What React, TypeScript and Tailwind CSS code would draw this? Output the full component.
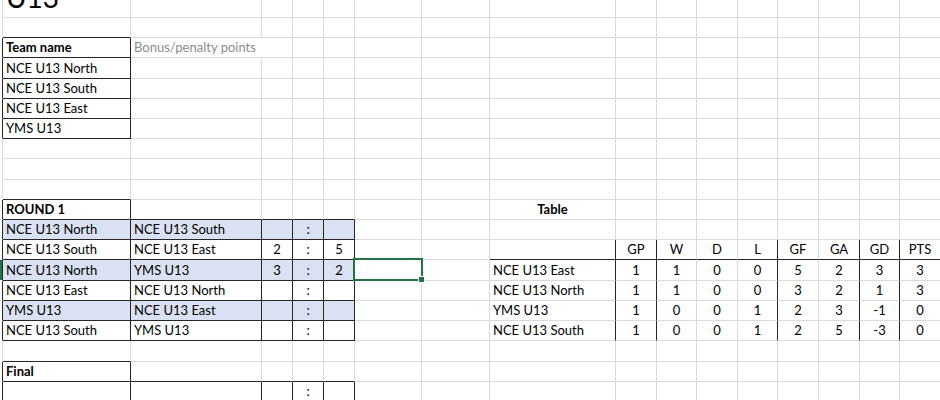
import React from "react";

type C = {
  t?: string;
  bold?: boolean;
  center?: boolean;
  gray?: boolean;
  fill?: boolean;
  R?: boolean;
  B?: boolean;
  hideR?: boolean;
  spill?: boolean;
  sel?: boolean;
  title?: boolean;
};

const NROWS = 20;
const NCOLS = 16;

function buildGrid(): C[][] {
  const g: C[][] = [];
  for (let r = 0; r < NROWS; r++) {
    const row: C[] = [];
    for (let c = 0; c < NCOLS; c++) row.push({});
    g.push(row);
  }
  g[0][0] = { t: "U13", title: true };
  g[1][0] = { B: true };
  g[2][0] = { t: "Team name", bold: true, R: true, B: true };
  g[2][1] = { t: "Bonus/penalty points", gray: true, spill: true, hideR: true };
  ["NCE U13 North", "NCE U13 South", "NCE U13 East", "YMS U13"].forEach((n, i) => {
    g[3 + i][0] = { t: n, R: true, B: true };
  });
  g[9][0] = { B: true };
  g[10][0] = { t: "ROUND 1", bold: true, R: true, B: true };
  g[10][1] = { B: true };
  g[10][2] = { B: true };
  g[10][3] = { B: true };
  g[10][4] = { B: true };
  g[10][7] = { t: "Table", bold: true, center: true };
  const matches: [string, string, string, string][] = [
    ["NCE U13 North", "NCE U13 South", "", ""],
    ["NCE U13 South", "NCE U13 East", "2", "5"],
    ["NCE U13 North", "YMS U13", "3", "2"],
    ["NCE U13 East", "NCE U13 North", "", ""],
    ["YMS U13", "NCE U13 East", "", ""],
    ["NCE U13 South", "YMS U13", "", ""],
  ];
  matches.forEach((m, i) => {
    const r = 11 + i;
    const fill = i % 2 === 0;
    g[r][0] = { t: m[0], R: true, B: true, fill };
    g[r][1] = { t: m[1], R: true, B: true, fill };
    g[r][2] = { t: m[2], R: true, B: true, fill, center: true };
    g[r][3] = { t: ":", R: true, B: true, fill, center: true };
    g[r][4] = { t: m[3], R: true, B: true, fill, center: true };
  });
  g[13][5] = { sel: true };
  const heads = ["GP", "W", "D", "L", "GF", "GA", "GD", "PTS"];
  const blackRight = [true, false, false, true, false, true, true, false];
  g[12][7] = { R: true, B: true };
  heads.forEach((h, i) => {
    g[12][8 + i] = { t: h, center: true, B: true, R: blackRight[i] };
  });
  const table: [string, string[]][] = [
    ["NCE U13 East", ["1", "1", "0", "0", "5", "2", "3", "3"]],
    ["NCE U13 North", ["1", "1", "0", "0", "3", "2", "1", "3"]],
    ["YMS U13", ["1", "0", "0", "1", "2", "3", "-1", "0"]],
    ["NCE U13 South", ["1", "0", "0", "1", "2", "5", "-3", "0"]],
  ];
  table.forEach(([name, vals], i) => {
    const r = 13 + i;
    g[r][7] = { t: name, R: true };
    vals.forEach((v, j) => {
      g[r][8 + j] = { t: v, center: true, R: blackRight[j] };
    });
  });
  g[17][0] = { B: true };
  g[18][0] = { t: "Final", bold: true, R: true, B: true };
  g[18][1] = { B: true };
  g[18][2] = { B: true };
  g[18][3] = { B: true };
  g[18][4] = { B: true };
  g[19][0] = { R: true };
  g[19][1] = { R: true };
  g[19][2] = { R: true };
  g[19][3] = { t: ":", R: true, center: true };
  g[19][4] = { R: true };
  return g;
}

const leftBlack = new Set([2, 3, 4, 5, 6, 10, 11, 12, 13, 14, 15, 16, 18, 19]);

function Cell({ c }: { c: C }) {
  if (c.title) {
    return (
      <div className="flex items-end overflow-hidden border-r border-b border-r-[#dadada] border-b-[#dadada] bg-white pl-[3px] pb-[6px]">
        <span className="text-[28px] leading-none text-black">{c.t}</span>
      </div>
    );
  }
  const cls = [
    "flex items-end whitespace-nowrap border-r border-b leading-[19px] text-[13px]",
    c.spill ? "relative z-10 overflow-visible" : c.sel ? "relative overflow-visible" : "overflow-hidden",
    c.R ? "border-r-[#262626]" : c.hideR ? "border-r-white" : "border-r-[#dadada]",
    c.B ? "border-b-[#262626]" : "border-b-[#dadada]",
    c.fill ? "bg-[#d9e1f2]" : "bg-white",
    c.center ? "justify-center" : "pl-[3px]",
    c.bold ? "font-bold" : "",
    c.gray ? "text-[#8c8c8c]" : "text-black",
  ].join(" ");
  return (
    <div className={cls}>
      {c.t ? <span>{c.t}</span> : null}
      {c.sel ? (
        <div className="absolute -left-[2px] -top-[2px] z-10 h-[23px] w-[70px] border-2 border-[#217346]">
          <div className="absolute left-[63px] top-[16px] h-[7px] w-[7px] border border-white bg-[#217346]" />
        </div>
      ) : null}
    </div>
  );
}

export default function App() {
  const grid = buildGrid();
  return (
    <div className="h-[400px] w-[940px] overflow-hidden bg-white font-[Lato,sans-serif] text-black">
      <div className="grid grid-cols-[3px_128px_131px_31px_31px_31px_67px_68px_126px_41px_40px_41px_40px_41px_41px_40px_41px] grid-rows-[18px_20px_20px_21px_20px_20px_20px_20px_21px_20px_20px_20px_20px_21px_20px_20px_20px_21px_20px_20px]">
        {grid.map((row, r) => (
          <React.Fragment key={r}>
            <div
              className={
                "border-r border-b border-b-transparent " +
                (leftBlack.has(r) ? "border-r-[#262626]" : "border-r-[#dadada]")
              }
            >
              {r === 13 ? <div className="h-full w-[2px] bg-[#217346]" /> : null}
            </div>
            {row.map((c, ci) => (
              <Cell key={ci} c={c} />
            ))}
          </React.Fragment>
        ))}
      </div>
    </div>
  );
}
